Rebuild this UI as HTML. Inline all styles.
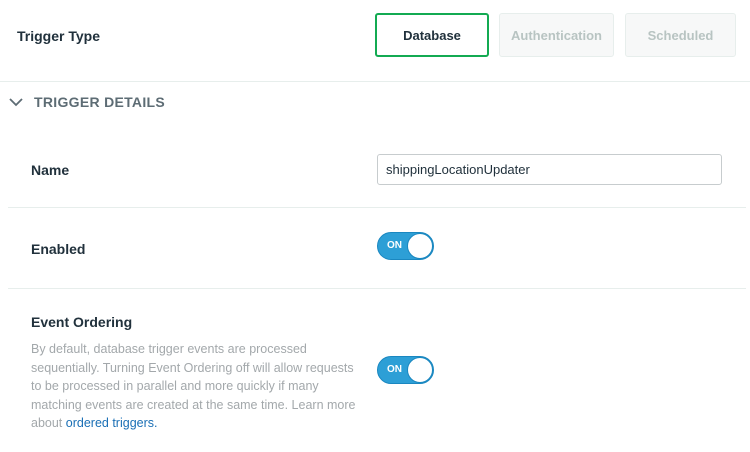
<!DOCTYPE html>
<html><head><style>
body{margin:0;width:750px;height:452px;background:#fff;font-family:"Liberation Sans",sans-serif;position:relative;overflow:hidden;color:#21313c}
.a{position:absolute}
.btn{position:absolute;top:13px;height:44px;border-radius:3px;box-sizing:border-box;font-size:13px;font-weight:bold;display:flex;align-items:center;justify-content:center}
.off{background:#f7f8f8;border:1px solid #e7eeec;color:#b8c4c2}
.lbl{font-size:14px;font-weight:bold;color:#21313c}
.tog{position:absolute;left:377px;width:57px;height:28px;border-radius:14px;background:#2d9fd6;box-sizing:border-box;border:1px solid #1a87c0}
.tog span{position:absolute;left:9px;top:7px;color:#fff;font-size:10px;font-weight:bold}
.tog i{position:absolute;right:0;top:0;width:26px;height:26px;border-radius:50%;background:#fff;border:1px solid #1a87c0;box-sizing:border-box}
</style></head><body>
<div class="a lbl" style="left:17px;top:28px;font-size:14px">Trigger Type</div>
<div class="btn" style="left:375px;width:114px;border:2px solid #13aa52;background:#fff;color:#21313c">Database</div>
<div class="btn off" style="left:499px;width:115px">Authentication</div>
<div class="btn off" style="left:625px;width:111px">Scheduled</div>
<div class="a" style="left:0;top:81px;width:750px;height:1px;background:#e7eeec"></div>
<svg class="a" style="left:8px;top:96px" width="16" height="12"><path d="M2 3 L8 9 L14 3" stroke="#5d6c74" stroke-width="1.8" fill="none"/></svg>
<div class="a" style="left:34px;top:94px;font-size:14px;font-weight:bold;color:#5d6c74;letter-spacing:0.3px">TRIGGER DETAILS</div>
<div class="a lbl" style="left:31px;top:162px">Name</div>
<div class="a" style="left:377px;top:154px;width:345px;height:31px;border:1px solid #c7ccce;border-radius:3px;box-sizing:border-box;font-size:13px;padding:7px 0 0 8px;color:#21313c">shippingLocationUpdater</div>
<div class="a" style="left:8px;top:207px;width:738px;height:1px;background:#e7eeec"></div>
<div class="a lbl" style="left:31px;top:241px">Enabled</div>
<div class="tog" style="top:232px"><span>ON</span><i></i></div>
<div class="a" style="left:8px;top:288px;width:738px;height:1px;background:#e7eeec"></div>
<div class="a lbl" style="left:31px;top:314px">Event Ordering</div>
<div class="a" style="left:31px;top:340px;width:330px;font-size:12.5px;line-height:18.5px;color:#a3a8ab">By default, database trigger events are processed sequentially. Turning Event Ordering off will allow requests to be processed in parallel and more quickly if many matching events are created at the same time. Learn more about <span style="color:#1a6fb5">ordered triggers.</span></div>
<div class="tog" style="top:356px"><span>ON</span><i></i></div>
</body></html>
